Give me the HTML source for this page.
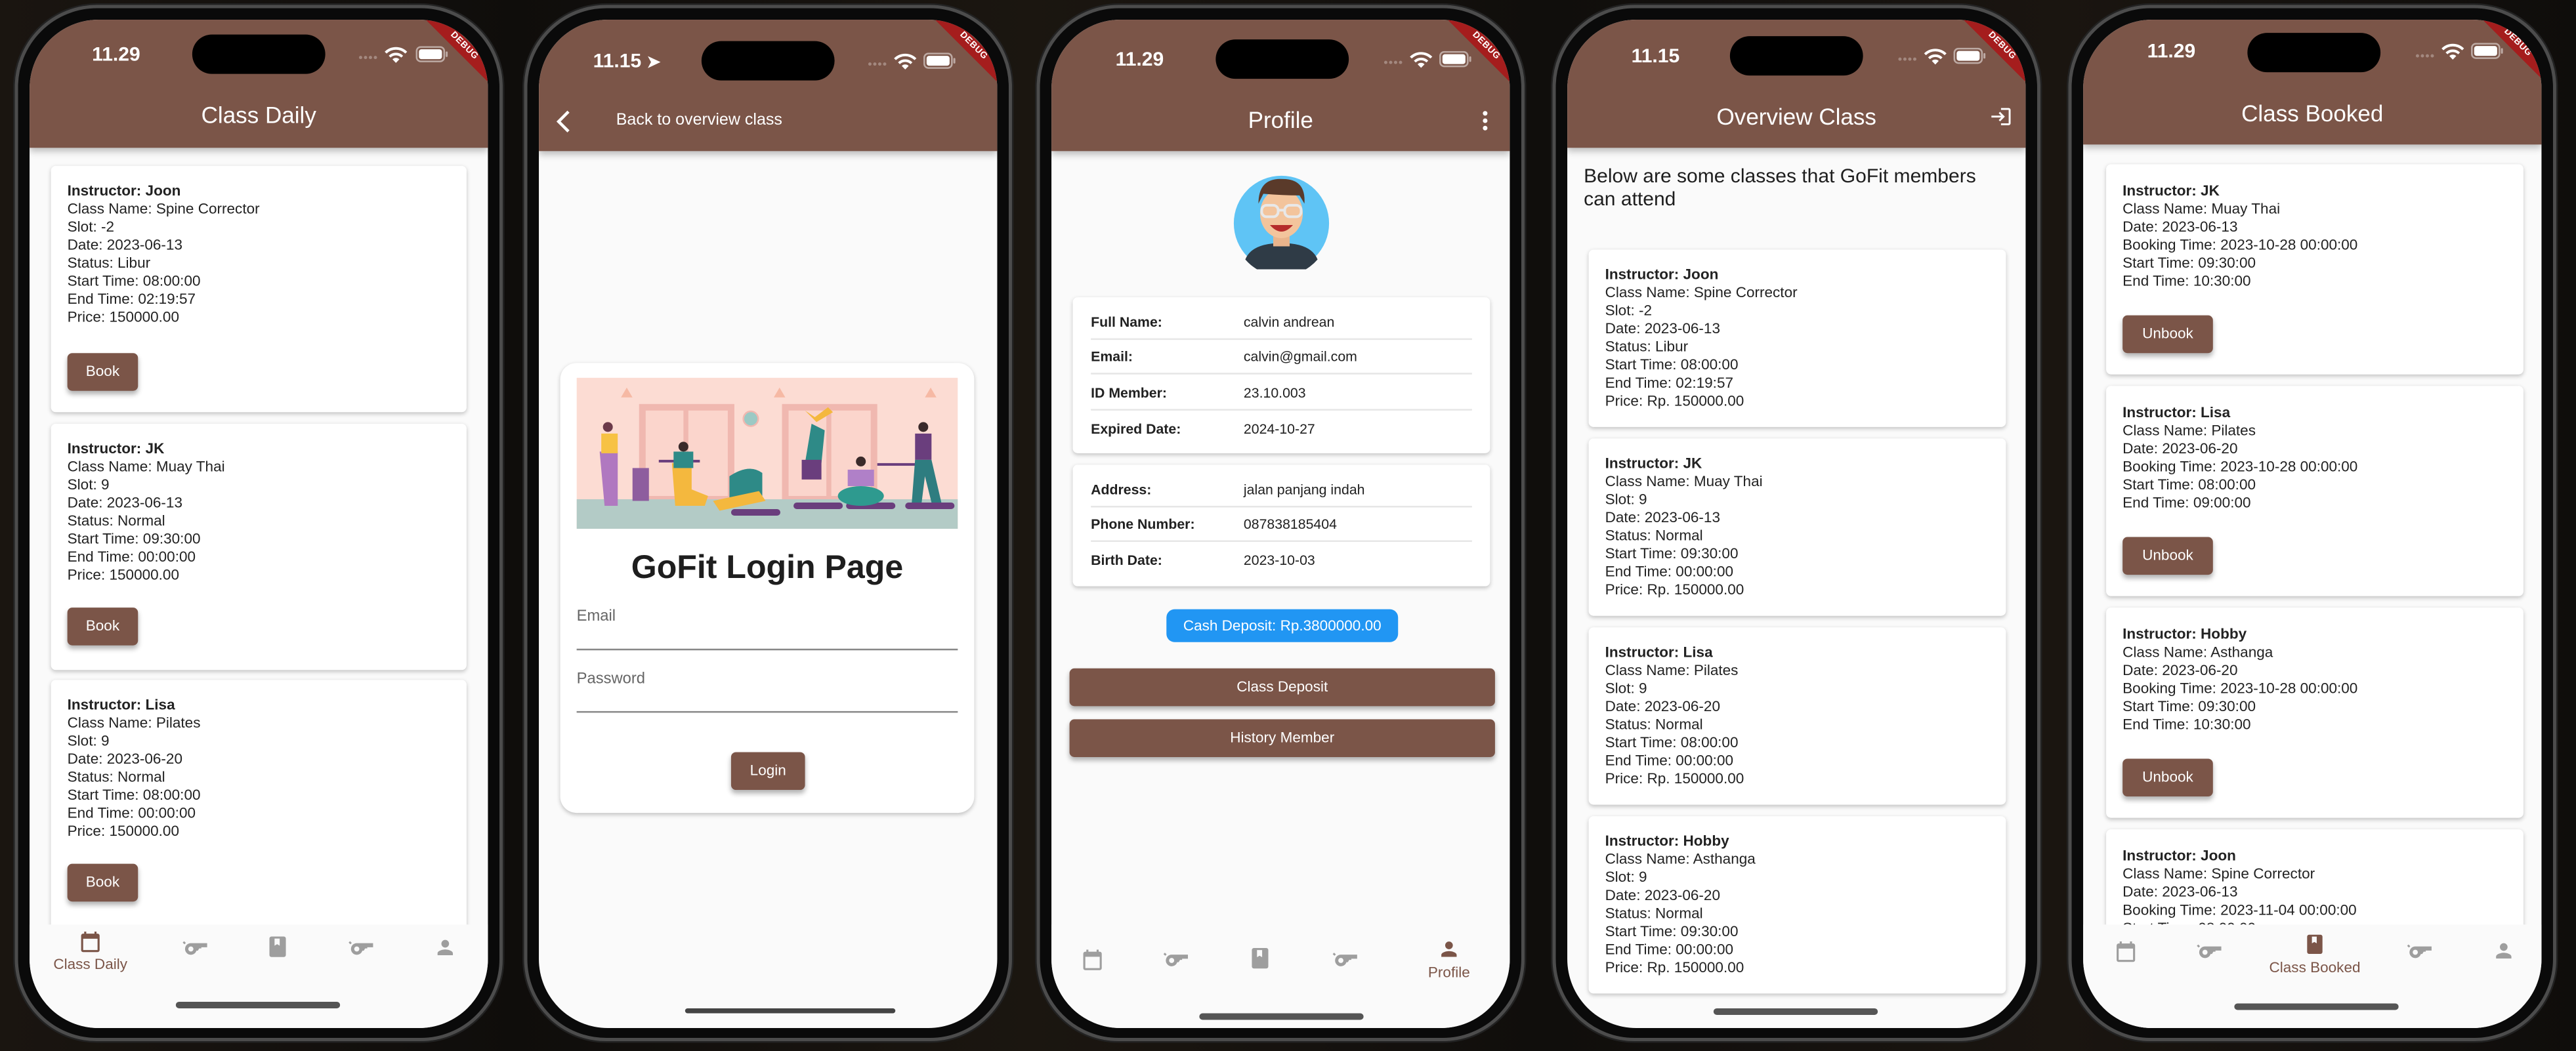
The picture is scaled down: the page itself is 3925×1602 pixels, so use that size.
<!DOCTYPE html>
<html><head><meta charset="utf-8">
<style>
*{margin:0;padding:0;box-sizing:border-box}
html,body{width:3925px;height:1600px;overflow:hidden;background:#14110e}
#w{position:absolute;left:0;top:0;width:1568px;height:640px;transform:scale(2.5032);transform-origin:0 0;font-family:"Liberation Sans",sans-serif;color:#212121}
.bg{position:absolute;inset:0;background:linear-gradient(90deg,#1a1510,#0f0d0b 20%,#1b1610 40%,#100e0c 60%,#1a1510 80%,#0f0d0b)}
.fr{position:absolute;top:3px;width:297px;height:631px;border-radius:50px;background:#0a0a0a;border:2.5px solid #4c4c4c;box-shadow:0 0 0 1px #222}
.ph{position:absolute;top:12px;width:279px;height:614px;border-radius:42px;overflow:hidden;background:#fafafa}
.ab{position:absolute;left:0;top:0;width:100%;background:#7b5548;box-shadow:0 2px 4px rgba(0,0,0,.25);z-index:2}
.isl{position:absolute;width:81px;height:24px;border-radius:12px;background:#000;z-index:3}
.tm{position:absolute;color:#fff;font-size:12px;font-weight:bold;z-index:3}
.sig{position:absolute;z-index:3}
.ttl{position:absolute;left:0;width:100%;text-align:center;color:#fff;font-size:14px;z-index:3}
.dbg{position:absolute;left:232px;top:12px;width:64px;height:9px;background:#a51d1d;transform:rotate(45deg);color:#fff;font-size:5.5px;font-weight:bold;text-align:center;line-height:9px;z-index:4;letter-spacing:.3px}
.cd{position:absolute;background:#fff;border-radius:3px;box-shadow:0 1px 2.5px rgba(0,0,0,.22)}
.tx{position:absolute;left:10px;font-size:9px;line-height:11px;color:#222}
.tx b{font-weight:bold}
.bt{position:absolute;background:#7b5548;color:#fff;font-size:9px;border-radius:3px;text-align:center;line-height:23px;height:23px;box-shadow:0 2px 3px rgba(0,0,0,.3)}
.nav{position:absolute;left:0;bottom:0;width:100%;height:63px;background:#fafafa;z-index:2}
.ni{position:absolute;transform:translateX(-50%)}
.nl{position:absolute;transform:translateX(-50%);font-size:9px;color:#7b5548;white-space:nowrap}
.hb{position:absolute;height:3.5px;width:100px;border-radius:2px;background:#555;z-index:5}
.row{position:absolute;left:11px;right:11px;height:21px;font-size:8.5px;line-height:21px;border-bottom:.6px solid #e6e6e6}
.row b{position:absolute;left:0}
.row span{position:absolute;left:93px}
</style></head><body><div id="w"><div class="bg"></div>

<svg width="0" height="0" style="position:absolute">
<defs>
<symbol id="wifi" viewBox="0 0 16 12"><path d="M8 11.5L5.6 9a3.4 3.4 0 0 1 4.8 0z M8 4.4a7 7 0 0 1 5 2.1l-1.3 1.3a5.2 5.2 0 0 0-7.4 0L3 6.5A7 7 0 0 1 8 4.4z M8 .5a11 11 0 0 1 7.8 3.2l-1.3 1.3a9.2 9.2 0 0 0-13 0L.2 3.7A11 11 0 0 1 8 .5z" fill="#fff"/></symbol>
<symbol id="bat" viewBox="0 0 20 10"><rect x=".6" y=".6" width="16.8" height="8.8" rx="2.5" fill="none" stroke="#fff" stroke-opacity=".5" stroke-width="1"/><rect x="2" y="2" width="14" height="6" rx="1.5" fill="#fff"/><rect x="18.3" y="3.3" width="1.2" height="3.4" rx=".6" fill="#fff" fill-opacity=".5"/></symbol>
<symbol id="cal" viewBox="0 0 24 24"><path d="M19 4h-1V2h-2v2H8V2H6v2H5a2 2 0 0 0-2 2v14a2 2 0 0 0 2 2h14a2 2 0 0 0 2-2V6a2 2 0 0 0-2-2zm0 16H5V9h14z"/></symbol>
<symbol id="whis" viewBox="0 0 24 24"><path d="M8 7.5a5 5 0 1 0 4.8 6.5H14l1.2-2H17v-1h5V7.5z"/><circle cx="8" cy="12.5" r="2.2" fill="#fafafa"/><path d="M2.5 8.5L1 7l1.2-1.2L3.7 7.3z"/></symbol>
<symbol id="book" viewBox="0 0 24 24"><path d="M18 2H6a2 2 0 0 0-2 2v16a2 2 0 0 0 2 2h12a2 2 0 0 0 2-2V4a2 2 0 0 0-2-2zM9 4h5v7l-2.5-1.5L9 11z"/></symbol>
<symbol id="per" viewBox="0 0 24 24"><path d="M12 12a4 4 0 1 0 0-8 4 4 0 0 0 0 8zm0 2c-2.7 0-8 1.3-8 4v2h16v-2c0-2.7-5.3-4-8-4z"/></symbol>
</defs></svg>

<!-- PHONE 1 -->
<div class="fr" style="left:9px"></div>
<div class="ph" style="left:18px">
 <div class="ab" style="height:78px"></div>
 <div class="isl" style="left:99px;top:9px"></div>
 <div class="tm" style="left:38px;top:14px">11.29</div>
 <svg class="sig" style="left:200px;top:17px" width="14" height="10"><g fill="#fff" fill-opacity=".3"><circle cx="1.5" cy="6" r="1"/><circle cx="4.5" cy="6" r="1"/><circle cx="7.5" cy="6" r="1"/><circle cx="10.5" cy="6" r="1"/></g></svg>
 <svg class="sig" style="left:216px;top:16px" width="14" height="11"><use href="#wifi"/></svg>
 <svg class="sig" style="left:235px;top:16px" width="20" height="10"><use href="#bat"/></svg>
 <div class="dbg">DEBUG</div>
 <div class="ttl" style="top:50px">Class Daily</div>

 <div class="cd" style="left:13px;top:89px;width:253px;height:150px">
  <div class="tx" style="top:10px"><b>Instructor: Joon</b><br>Class Name: Spine Corrector<br>Slot: -2<br>Date: 2023-06-13<br>Status: Libur<br>Start Time: 08:00:00<br>End Time: 02:19:57<br>Price: 150000.00</div>
  <div class="bt" style="left:10px;top:114px;width:43px">Book</div>
 </div>
 <div class="cd" style="left:13px;top:246px;width:253px;height:150px">
  <div class="tx" style="top:10px"><b>Instructor: JK</b><br>Class Name: Muay Thai<br>Slot: 9<br>Date: 2023-06-13<br>Status: Normal<br>Start Time: 09:30:00<br>End Time: 00:00:00<br>Price: 150000.00</div>
  <div class="bt" style="left:10px;top:112px;width:43px">Book</div>
 </div>
 <div class="cd" style="left:13px;top:402px;width:253px;height:160px">
  <div class="tx" style="top:10px"><b>Instructor: Lisa</b><br>Class Name: Pilates<br>Slot: 9<br>Date: 2023-06-20<br>Status: Normal<br>Start Time: 08:00:00<br>End Time: 00:00:00<br>Price: 150000.00</div>
  <div class="bt" style="left:10px;top:112px;width:43px">Book</div>
 </div>
 <div class="nav">
  <svg class="ni" style="left:37px;top:3px;fill:#7b5548" width="15" height="15"><use href="#cal"/></svg>
  <div class="nl" style="left:37px;top:19px">Class Daily</div>
  <svg class="ni" style="left:101px;top:6px;fill:#9e9e9e" width="17" height="17"><use href="#whis"/></svg>
  <svg class="ni" style="left:151px;top:6px;fill:#9e9e9e" width="15" height="15"><use href="#book"/></svg>
  <svg class="ni" style="left:202px;top:6px;fill:#9e9e9e" width="17" height="17"><use href="#whis"/></svg>
  <svg class="ni" style="left:253px;top:7px;fill:#9e9e9e" width="14" height="14"><use href="#per"/></svg>
 </div>
 <div class="hb" style="left:89px;top:598px"></div>
</div>

<!-- PHONE 2 -->
<div class="fr" style="left:319px"></div>
<div class="ph" style="left:328px">
 <div class="ab" style="height:80px"></div>
 <div class="isl" style="left:99px;top:13px"></div>
 <div class="tm" style="left:33px;top:18px">11.15 <span style="font-size:10px">➤</span></div>
 <svg class="sig" style="left:200px;top:21px" width="14" height="10"><g fill="#fff" fill-opacity=".3"><circle cx="1.5" cy="6" r="1"/><circle cx="4.5" cy="6" r="1"/><circle cx="7.5" cy="6" r="1"/><circle cx="10.5" cy="6" r="1"/></g></svg>
 <svg class="sig" style="left:216px;top:20px" width="14" height="11"><use href="#wifi"/></svg>
 <svg class="sig" style="left:234px;top:20px" width="20" height="10"><use href="#bat"/></svg>
 <div class="dbg">DEBUG</div>
 <svg style="position:absolute;left:10px;top:55px;z-index:3" width="10" height="14"><path d="M8 1L2 7l6 6" stroke="#fff" stroke-width="1.8" fill="none"/></svg>
 <div style="position:absolute;left:47px;top:56px;color:#fff;font-size:10px;z-index:3">Back to overview class</div>
 <div class="cd" style="left:13px;top:209px;width:252px;height:274px;border-radius:10px">
  <svg style="position:absolute;left:10px;top:9px" width="232" height="92" viewBox="0 0 232 92">
   <rect width="232" height="92" fill="#fcdcd3"/>
   <rect x="0" y="74" width="232" height="18" fill="#b3cbc6"/>
   <rect x="38" y="16" width="58" height="58" fill="#f0b8b0"/><rect x="42" y="20" width="23" height="52" fill="#fbd5cc"/><rect x="68" y="20" width="24" height="52" fill="#fbd5cc"/>
   <rect x="125" y="16" width="58" height="58" fill="#f0b8b0"/><rect x="129" y="20" width="23" height="52" fill="#fbd5cc"/><rect x="155" y="20" width="24" height="52" fill="#fbd5cc"/>
   <circle cx="106" cy="25" r="4.5" fill="#9cc9c4" stroke="#f0b8b0"/>
   <path d="M27 12l7 0-3.5-6z M120 12l7 0-3.5-6z M212 12l7 0-3.5-6z" fill="#f6b9a4"/>
   <rect x="34" y="55" width="10" height="20" fill="#8e5d9e"/>
   <g fill="#6a3e7d"><rect x="94" y="80" width="30" height="4" rx="2"/><rect x="132" y="76" width="30" height="4" rx="2"/><rect x="164" y="76" width="30" height="4" rx="2"/><rect x="200" y="76" width="30" height="4" rx="2"/><rect x="50" y="50" width="25" height="1.6"/><rect x="183" y="52" width="28" height="1.6"/></g>
   <path d="M14 45h11v33h-8z" fill="#b078c0"/><rect x="15" y="34" width="10" height="12" fill="#f7c244"/><circle cx="19" cy="30" r="3" fill="#6b3a4a"/>
   <path d="M58 52h12v16l10 4-2 6H60z" fill="#f4b83e"/><rect x="59" y="45" width="12" height="10" fill="#2e8a87"/><circle cx="65" cy="42" r="3" fill="#3a2a2a"/>
   <path d="M93 60q12-8 20-2v14l-20 6z" fill="#2e8a87"/><path d="M83 75l28-6 4 6-28 6z" fill="#f4b83e"/>
   <path d="M143 28l8 4-2 20h-10z" fill="#2e8a87"/><path d="M137 50h12v12h-12z" fill="#6a3e7d"/><path d="M139 20l6 4 8-6 3 3-10 6z" fill="#f4b83e"/>
   <path d="M165 56h16v10h-16z" fill="#b080c8"/><ellipse cx="173" cy="72" rx="14" ry="6" fill="#2e9a8f"/><circle cx="173" cy="51" r="3" fill="#3a2a2a"/>
   <path d="M206 34h10v16h-10z" fill="#6a3e7d"/><path d="M206 50h10l6 26h-6l-4-16-2 16h-6z" fill="#2e7d80"/><circle cx="211" cy="30" r="3" fill="#3a2a2a"/>
  </svg>
  <div style="position:absolute;left:0;width:100%;top:114px;text-align:center;font-size:20px;font-weight:bold;color:#1e1e1e">GoFit Login Page</div>
  <div style="position:absolute;left:10px;top:149px;font-size:9.5px;color:#666">Email</div>
  <div style="position:absolute;left:10px;right:10px;top:174px;border-top:1px solid #888"></div>
  <div style="position:absolute;left:10px;top:187px;font-size:9.5px;color:#666">Password</div>
  <div style="position:absolute;left:10px;right:10px;top:212px;border-top:1px solid #888"></div>
  <div class="bt" style="left:104px;top:237px;width:45px">Login</div>
 </div>
 <div class="hb" style="left:89px;top:602px;width:128px;height:3px;background:#444"></div>
</div>

<!-- PHONE 3 -->
<div class="fr" style="left:631px"></div>
<div class="ph" style="left:640px">
 <div class="ab" style="height:80px"></div>
 <div class="isl" style="left:100px;top:12px"></div>
 <div class="tm" style="left:39px;top:17px">11.29</div>
 <svg class="sig" style="left:202px;top:20px" width="14" height="10"><g fill="#fff" fill-opacity=".3"><circle cx="1.5" cy="6" r="1"/><circle cx="4.5" cy="6" r="1"/><circle cx="7.5" cy="6" r="1"/><circle cx="10.5" cy="6" r="1"/></g></svg>
 <svg class="sig" style="left:218px;top:19px" width="14" height="11"><use href="#wifi"/></svg>
 <svg class="sig" style="left:236px;top:19px" width="20" height="10"><use href="#bat"/></svg>
 <div class="dbg">DEBUG</div>
 <div class="ttl" style="top:53px">Profile</div>
 <svg style="position:absolute;left:262px;top:55px;z-index:3" width="4" height="13"><circle cx="2" cy="2" r="1.4" fill="#fff"/><circle cx="2" cy="6.5" r="1.4" fill="#fff"/><circle cx="2" cy="11" r="1.4" fill="#fff"/></svg>
 <svg style="position:absolute;left:108px;top:88px" width="64" height="64" viewBox="0 0 64 64">
  <circle cx="32" cy="36" r="29" fill="#5fc4f5"/>
  <path d="M10 58q4-10 22-10t22 10a29 29 0 0 1-44 0z" fill="#2f3b46"/>
  <rect x="27" y="40" width="10" height="10" fill="#e9b48c"/>
  <ellipse cx="32" cy="30" rx="13" ry="15" fill="#f3c49c"/>
  <path d="M18 24q0-16 15-15 14 0 13 15l-3-5q-10 0-22-1z" fill="#5a3a2a"/>
  <g fill="none" stroke="#e8e8e8" stroke-width="1.6"><rect x="20" y="25" width="10" height="7" rx="3"/><rect x="34" y="25" width="10" height="7" rx="3"/><path d="M30 28h4"/></g>
  <path d="M25 37q7 8 14 0z" fill="#b52b2b"/>
 </svg>
 <div class="cd" style="left:13px;top:169px;width:254px;height:95px">
  <div class="row" style="top:5px"><b>Full Name:</b><span>calvin andrean</span></div>
  <div class="row" style="top:26px"><b>Email:</b><span>calvin@gmail.com</span></div>
  <div class="row" style="top:48px"><b>ID Member:</b><span>23.10.003</span></div>
  <div class="row" style="top:70px;border:0"><b>Expired Date:</b><span>2024-10-27</span></div>
 </div>
 <div class="cd" style="left:13px;top:271px;width:254px;height:74px">
  <div class="row" style="top:5px"><b>Address:</b><span>jalan panjang indah</span></div>
  <div class="row" style="top:26px"><b>Phone Number:</b><span>087838185404</span></div>
  <div class="row" style="top:48px;border:0"><b>Birth Date:</b><span>2023-10-03</span></div>
 </div>
 <div style="position:absolute;left:70px;top:359px;width:141px;height:20px;border-radius:5px;background:#2196f3;color:#fff;font-size:9px;line-height:20px;text-align:center">Cash Deposit: Rp.3800000.00</div>
 <div class="bt" style="left:11px;top:395px;width:259px">Class Deposit</div>
 <div class="bt" style="left:11px;top:426px;width:259px">History Member</div>
 <div class="nav">
  <svg class="ni" style="left:25px;top:14px;fill:#9e9e9e" width="15" height="15"><use href="#cal"/></svg>
  <svg class="ni" style="left:76px;top:13px;fill:#9e9e9e" width="17" height="17"><use href="#whis"/></svg>
  <svg class="ni" style="left:127px;top:13px;fill:#9e9e9e" width="15" height="15"><use href="#book"/></svg>
  <svg class="ni" style="left:179px;top:13px;fill:#9e9e9e" width="17" height="17"><use href="#whis"/></svg>
  <svg class="ni" style="left:242px;top:8px;fill:#7b5548" width="14" height="14"><use href="#per"/></svg>
  <div class="nl" style="left:242px;top:24px">Profile</div>
 </div>
 <div class="hb" style="left:90px;top:605px"></div>
</div>

<!-- PHONE 4 -->
<div class="fr" style="left:945px"></div>
<div class="ph" style="left:954px">
 <div class="ab" style="height:78px"></div>
 <div class="isl" style="left:99px;top:10px"></div>
 <div class="tm" style="left:39px;top:15px">11.15</div>
 <svg class="sig" style="left:201px;top:18px" width="14" height="10"><g fill="#fff" fill-opacity=".3"><circle cx="1.5" cy="6" r="1"/><circle cx="4.5" cy="6" r="1"/><circle cx="7.5" cy="6" r="1"/><circle cx="10.5" cy="6" r="1"/></g></svg>
 <svg class="sig" style="left:217px;top:17px" width="14" height="11"><use href="#wifi"/></svg>
 <svg class="sig" style="left:235px;top:17px" width="20" height="10"><use href="#bat"/></svg>
 <div class="dbg">DEBUG</div>
 <div class="ttl" style="top:51px">Overview Class</div>
 <svg style="position:absolute;left:257px;top:52px;z-index:3" width="14" height="14" viewBox="0 0 24 24"><path d="M11 7L9.6 8.4l2.6 2.6H2v2h10.2l-2.6 2.6L11 17l5-5zm9 12h-8v2h8a2 2 0 0 0 2-2V5a2 2 0 0 0-2-2h-8v2h8z" fill="#fff"/></svg>
 <div style="position:absolute;left:10px;top:88px;font-size:12px;line-height:14px;color:#1e1e1e">Below are some classes that GoFit members<br>can attend</div>
 <div class="cd" style="left:13px;top:140px;width:254px;height:108px">
  <div class="tx" style="top:9.5px"><b>Instructor: Joon</b><br>Class Name: Spine Corrector<br>Slot: -2<br>Date: 2023-06-13<br>Status: Libur<br>Start Time: 08:00:00<br>End Time: 02:19:57<br>Price: Rp. 150000.00</div>
 </div>
 <div class="cd" style="left:13px;top:255px;width:254px;height:108px">
  <div class="tx" style="top:9.5px"><b>Instructor: JK</b><br>Class Name: Muay Thai<br>Slot: 9<br>Date: 2023-06-13<br>Status: Normal<br>Start Time: 09:30:00<br>End Time: 00:00:00<br>Price: Rp. 150000.00</div>
 </div>
 <div class="cd" style="left:13px;top:370px;width:254px;height:108px">
  <div class="tx" style="top:9.5px"><b>Instructor: Lisa</b><br>Class Name: Pilates<br>Slot: 9<br>Date: 2023-06-20<br>Status: Normal<br>Start Time: 08:00:00<br>End Time: 00:00:00<br>Price: Rp. 150000.00</div>
 </div>
 <div class="cd" style="left:13px;top:485px;width:254px;height:108px">
  <div class="tx" style="top:9.5px"><b>Instructor: Hobby</b><br>Class Name: Asthanga<br>Slot: 9<br>Date: 2023-06-20<br>Status: Normal<br>Start Time: 09:30:00<br>End Time: 00:00:00<br>Price: Rp. 150000.00</div>
 </div>
 <div class="hb" style="left:89px;top:602px"></div>
</div>

<!-- PHONE 5 -->
<div class="fr" style="left:1259px"></div>
<div class="ph" style="left:1268px">
 <div class="ab" style="height:76px"></div>
 <div class="isl" style="left:100px;top:8px"></div>
 <div class="tm" style="left:39px;top:12px">11.29</div>
 <svg class="sig" style="left:202px;top:16px" width="14" height="10"><g fill="#fff" fill-opacity=".3"><circle cx="1.5" cy="6" r="1"/><circle cx="4.5" cy="6" r="1"/><circle cx="7.5" cy="6" r="1"/><circle cx="10.5" cy="6" r="1"/></g></svg>
 <svg class="sig" style="left:218px;top:14px" width="14" height="11"><use href="#wifi"/></svg>
 <svg class="sig" style="left:236px;top:14px" width="20" height="10"><use href="#bat"/></svg>
 <div class="dbg" style="top:10px">DEBUG</div>
 <div class="ttl" style="top:49px">Class Booked</div>
 <div class="cd" style="left:14px;top:88px;width:254px;height:128px">
  <div class="tx" style="top:10.5px"><b>Instructor: JK</b><br>Class Name: Muay Thai<br>Date: 2023-06-13<br>Booking Time: 2023-10-28 00:00:00<br>Start Time: 09:30:00<br>End Time: 10:30:00</div>
  <div class="bt" style="left:10px;top:92px;width:55px">Unbook</div>
 </div>
 <div class="cd" style="left:14px;top:223px;width:254px;height:128px">
  <div class="tx" style="top:10.5px"><b>Instructor: Lisa</b><br>Class Name: Pilates<br>Date: 2023-06-20<br>Booking Time: 2023-10-28 00:00:00<br>Start Time: 08:00:00<br>End Time: 09:00:00</div>
  <div class="bt" style="left:10px;top:92px;width:55px">Unbook</div>
 </div>
 <div class="cd" style="left:14px;top:358px;width:254px;height:128px">
  <div class="tx" style="top:10.5px"><b>Instructor: Hobby</b><br>Class Name: Asthanga<br>Date: 2023-06-20<br>Booking Time: 2023-10-28 00:00:00<br>Start Time: 09:30:00<br>End Time: 10:30:00</div>
  <div class="bt" style="left:10px;top:92px;width:55px">Unbook</div>
 </div>
 <div class="cd" style="left:14px;top:493px;width:254px;height:128px">
  <div class="tx" style="top:10.5px"><b>Instructor: Joon</b><br>Class Name: Spine Corrector<br>Date: 2023-06-13<br>Booking Time: 2023-11-04 00:00:00<br>Start Time: 08:00:00</div>
 </div>
 <div class="nav">
  <svg class="ni" style="left:26px;top:9px;fill:#9e9e9e" width="15" height="15"><use href="#cal"/></svg>
  <svg class="ni" style="left:77px;top:8px;fill:#9e9e9e" width="17" height="17"><use href="#whis"/></svg>
  <svg class="ni" style="left:141px;top:5px;fill:#7b5548" width="14" height="14"><use href="#book"/></svg>
  <div class="nl" style="left:141px;top:21px">Class Booked</div>
  <svg class="ni" style="left:205px;top:8px;fill:#9e9e9e" width="17" height="17"><use href="#whis"/></svg>
  <svg class="ni" style="left:256px;top:9px;fill:#9e9e9e" width="14" height="14"><use href="#per"/></svg>
 </div>
 <div class="hb" style="left:92px;top:599px"></div>
</div>

</div></body></html>
